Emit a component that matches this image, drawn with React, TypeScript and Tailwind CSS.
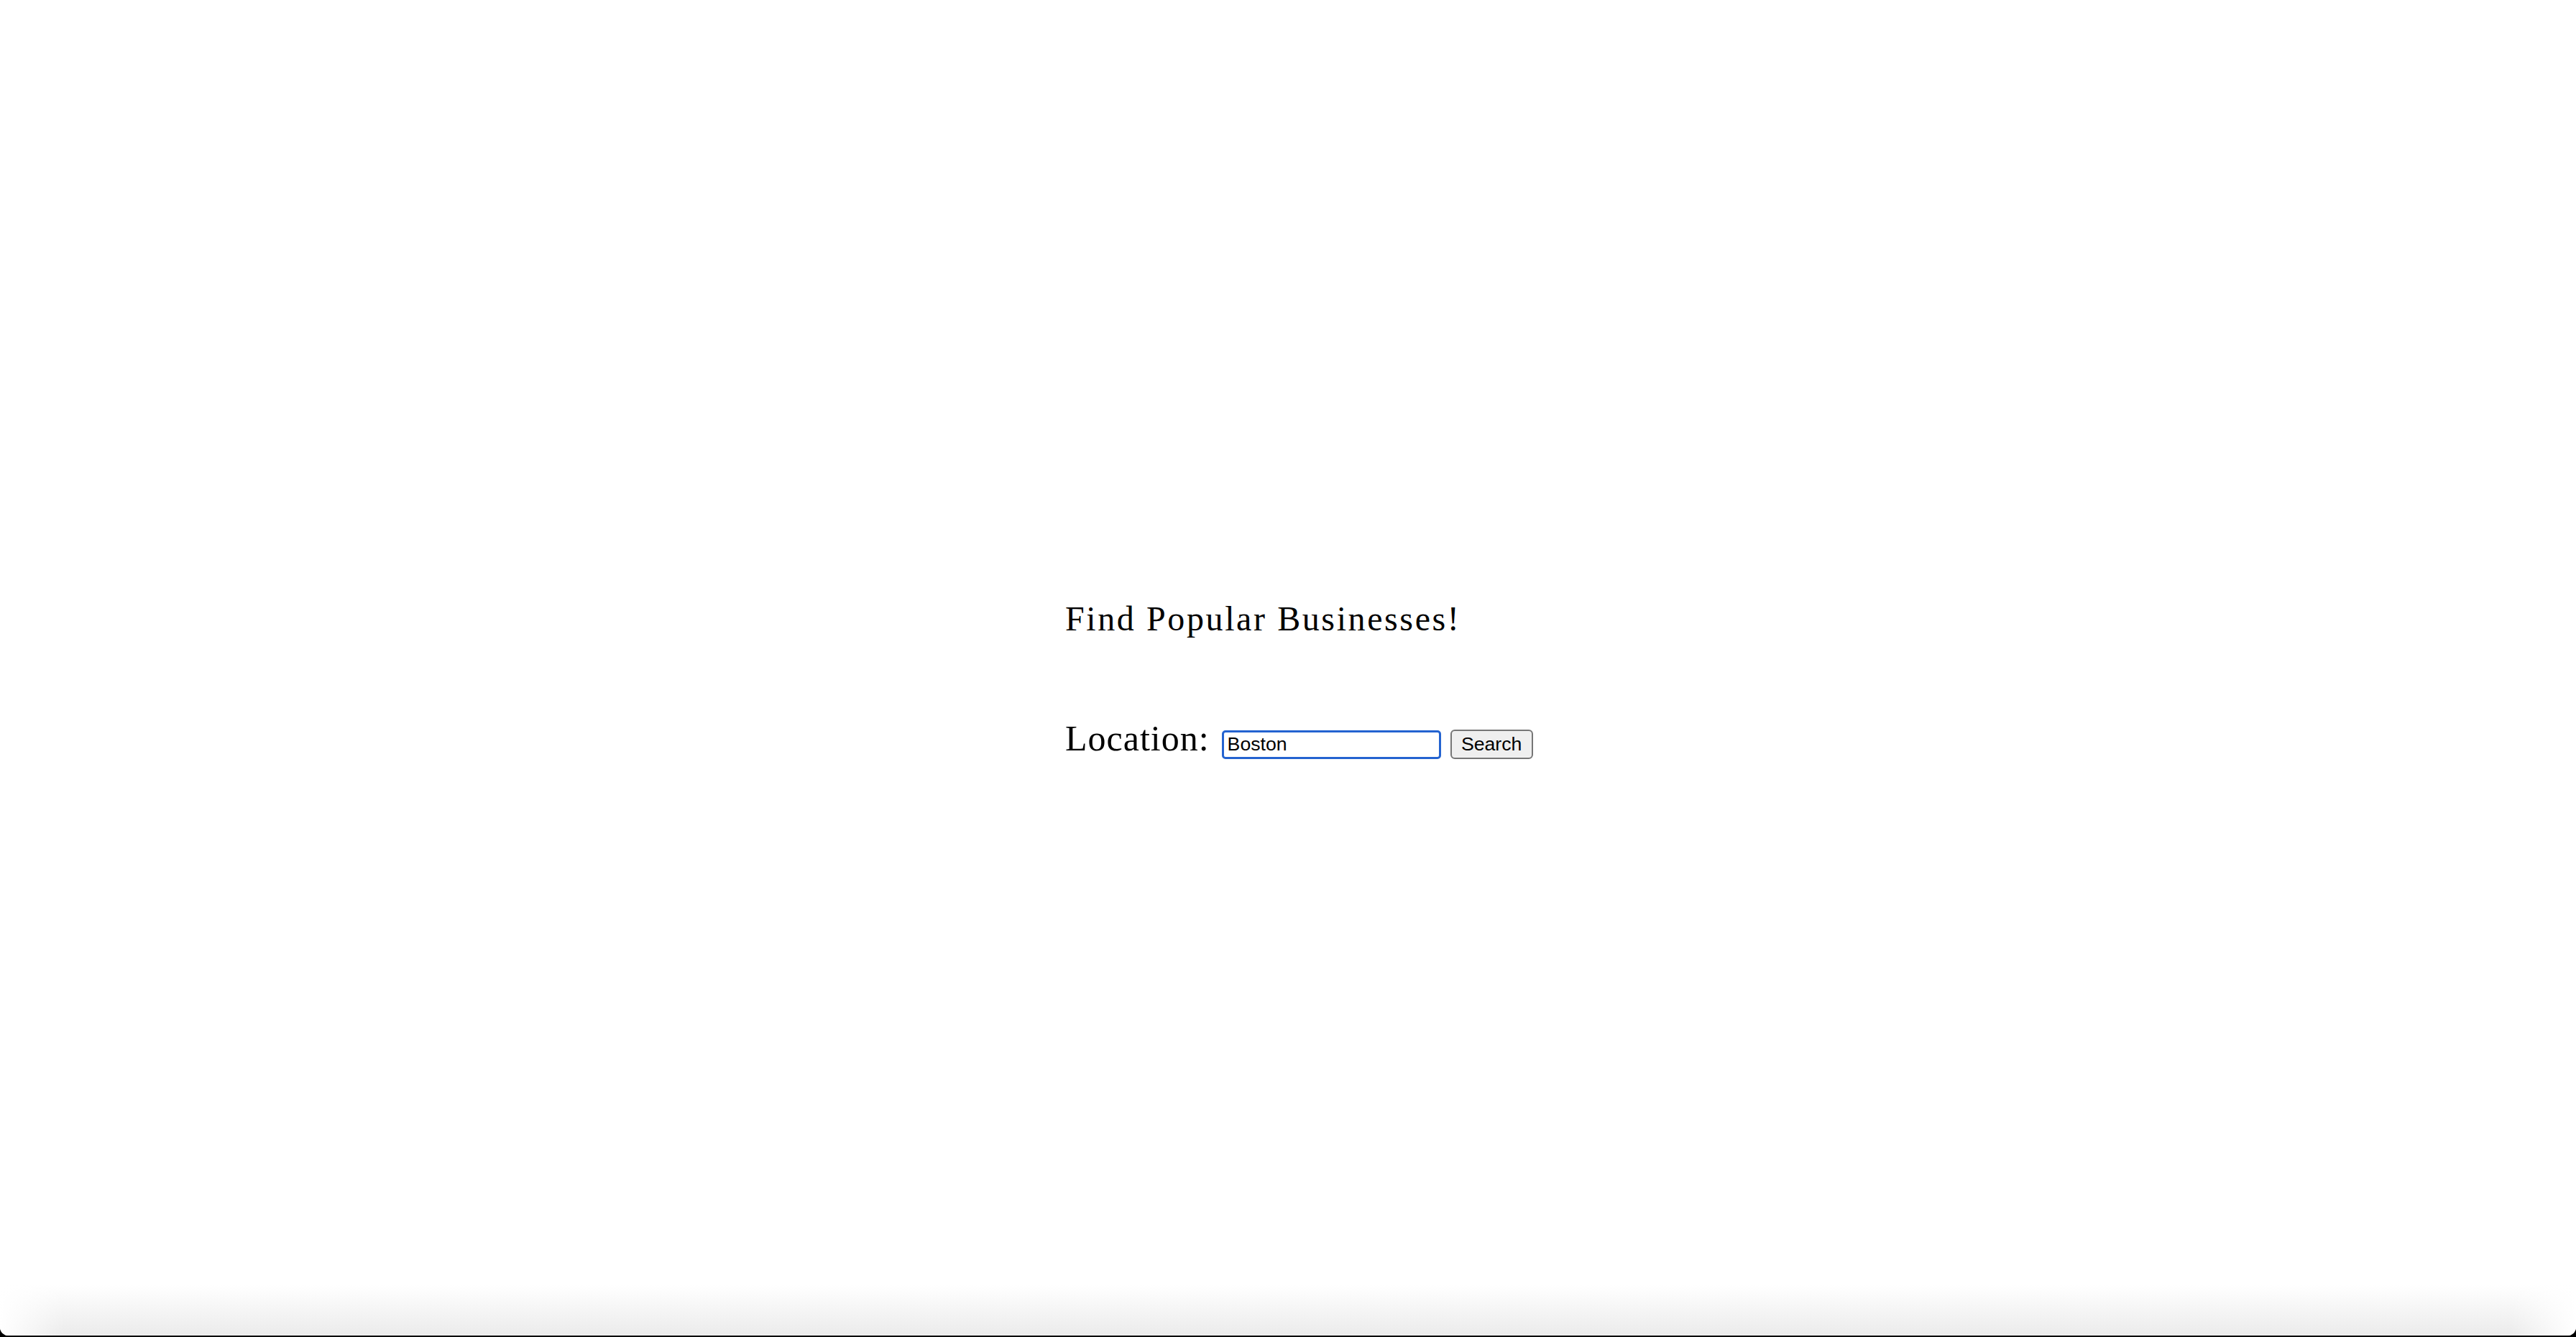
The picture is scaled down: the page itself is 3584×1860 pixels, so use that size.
export default function App() {
  return (
    <div className="flex h-[1860px] flex-col bg-black">
      <div className="mb-[2px] flex flex-1 flex-col overflow-hidden rounded-b-[12px] bg-white">
        {/* page body */}
        <main className="flex-1 pt-[837px]">
          <div className="mx-auto w-[620px]">
            <h2 className="font-['Liberation_Serif',serif] text-[48px] leading-none tracking-[2.6px] text-black">
              Find Popular Businesses!
            </h2>
            <form
              className="mt-[117px] flex w-max items-baseline"
              onSubmit={(e) => e.preventDefault()}
            >
              <label className="shrink-0 font-['Liberation_Serif',serif] text-[50px] leading-none tracking-[1px] text-black">
                Location:
              </label>
              <input
                type="text"
                defaultValue="Boston"
                className="ml-[17px] h-[40px] w-[305px] shrink-0 rounded-[5px] border-[3px] border-[#2463d0] bg-white px-[5px] font-['Liberation_Sans',Arial,sans-serif] text-[26.67px] text-black outline-none"
              />
              <button
                type="submit"
                className="ml-[13px] h-[41px] w-[115px] shrink-0 rounded-[6px] border-2 border-[#767676] bg-[#efefef] font-['Liberation_Sans',Arial,sans-serif] text-[26.67px] leading-none text-black"
              >
                Search
              </button>
            </form>
          </div>
        </main>

        {/* window bottom shading */}
        <div className="relative h-[70px] bg-gradient-to-b from-white to-[#ebebeb]">
          <div className="absolute inset-y-0 left-0 w-[90px] bg-gradient-to-r from-white to-transparent"></div>
          <div className="absolute inset-y-0 right-0 w-[90px] bg-gradient-to-l from-white to-transparent"></div>
        </div>
      </div>
    </div>
  );
}
